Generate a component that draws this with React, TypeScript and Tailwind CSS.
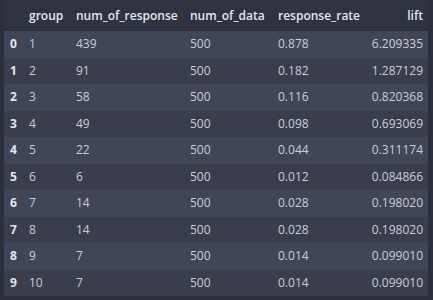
import React from "react";

const rows = [
  ["0", "1", "439", "500", "0.878", "6.209335"],
  ["1", "2", "91", "500", "0.182", "1.287129"],
  ["2", "3", "58", "500", "0.116", "0.820368"],
  ["3", "4", "49", "500", "0.098", "0.693069"],
  ["4", "5", "22", "500", "0.044", "0.311174"],
  ["5", "6", "6", "500", "0.012", "0.084866"],
  ["6", "7", "14", "500", "0.028", "0.198020"],
  ["7", "8", "14", "500", "0.028", "0.198020"],
  ["8", "9", "7", "500", "0.014", "0.099010"],
  ["9", "10", "7", "500", "0.014", "0.099010"],
];

export default function App() {
  return (
    <div
      className="w-[433px] h-[300px] bg-[#2b2f3a] overflow-hidden text-[12px]"
      style={{ fontFamily: '"Open Sans", "Liberation Sans", sans-serif' }}
    >
      <div className="ml-[4px] w-[424px] flex flex-col">
        <div className="h-[31px] bg-[#2f333f] grid grid-cols-[19px_47px_114px_88px_1fr_auto] items-center pl-[6px] pr-[5px] font-semibold text-[#e2e6ef]">
          <div></div>
          <div>group</div>
          <div>num_of_response</div>
          <div>num_of_data</div>
          <div>response_rate</div>
          <div className="text-right">lift</div>
        </div>
        {rows.map((r, i) => (
          <div
            key={i}
            className={`h-[26.5px] grid grid-cols-[19px_47px_114px_88px_1fr_auto] items-center pl-[6px] pr-[5px] text-[#c9cdd7] ${
              i % 2 === 0 ? "bg-[#414656]" : "bg-[#3a3e4c]"
            }`}
          >
            <div className="font-bold text-[#e2e6ef]">{r[0]}</div>
            <div>{r[1]}</div>
            <div>{r[2]}</div>
            <div>{r[3]}</div>
            <div>{r[4]}</div>
            <div className="text-right">{r[5]}</div>
          </div>
        ))}
      </div>
    </div>
  );
}
